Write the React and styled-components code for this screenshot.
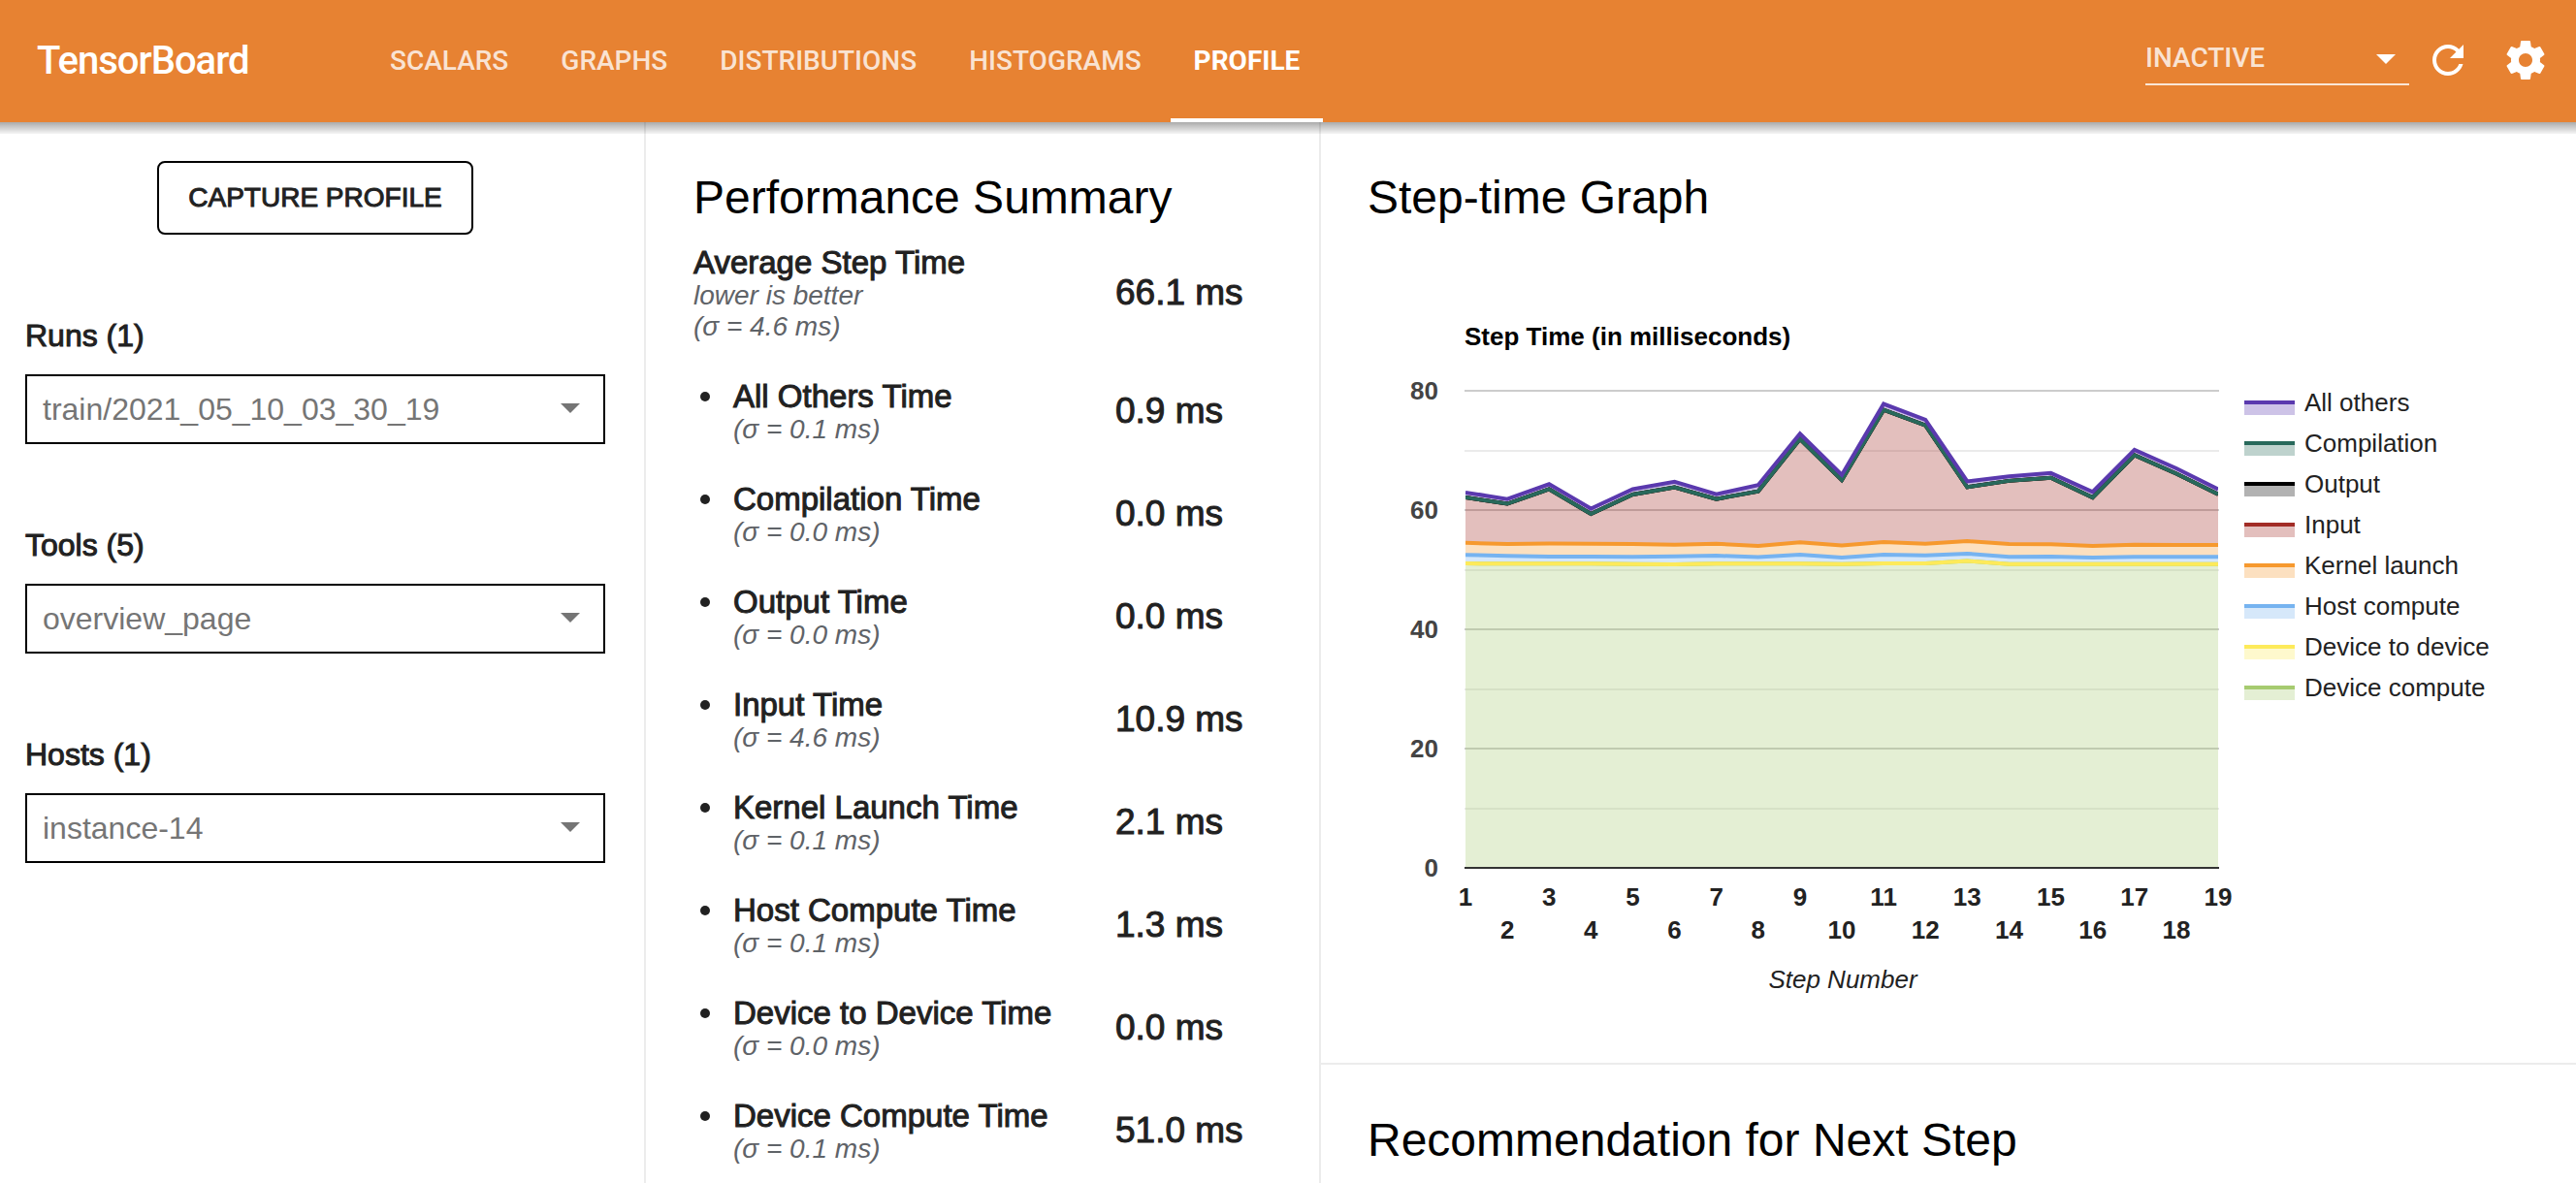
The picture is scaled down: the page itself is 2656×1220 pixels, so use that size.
import React from 'react';
import styled, { createGlobalStyle, css } from 'styled-components';

const SANS = '"Liberation Sans", Arial, Helvetica, sans-serif';
const ROBOTO = 'Roboto, "Liberation Sans", sans-serif';

const GlobalStyle = createGlobalStyle`
  *, *::before, *::after { box-sizing: border-box; }
  html, body, #root { height: 100%; }
  body {
    margin: 0;
    overflow: hidden;
    background: #fff;
    color: #212121;
    font-family: ${SANS};
  }
`;

/* The family has no 500 weight: a thin outline thickens the regular one. */
const mediumWeight = css`
  font-weight: 400;
  -webkit-text-stroke: 1px currentColor;
`;

const Page = styled.div`
  height: 100%;
  display: flex;
  flex-direction: column;
`;

/* ---------- header ---------- */

const Header = styled.header`
  position: relative;
  z-index: 1;
  flex: none;
  display: flex;
  align-items: center;
  height: 126px;
  padding: 0 28px 0 38px;
  background: #e78232;
  color: #fff;
  font-family: ${ROBOTO};

  &::after {
    content: '';
    position: absolute;
    top: 100%;
    left: 0;
    right: 0;
    height: 12px;
    background: linear-gradient(rgba(0, 0, 0, 0.33), rgba(0, 0, 0, 0.04));
    pointer-events: none;
  }
`;

const Brand = styled.h1`
  margin: 0;
  width: 340px;
  font-size: 40px;
  line-height: 48px;
  font-weight: 500;
  letter-spacing: -1px;
`;

const Tabs = styled.nav`
  flex: 1;
  align-self: stretch;
  display: flex;
  gap: 6px;
`;

const Tab = styled.a`
  display: flex;
  align-items: center;
  padding: 4px 24px 0;
  border-bottom: 4px solid ${(p) => (p.$active ? '#fff' : 'transparent')};
  color: ${(p) => (p.$active ? '#fff' : 'rgba(255, 255, 255, 0.8)')};
  font-size: 28px;
  line-height: 32px;
  font-weight: ${(p) => (p.$active ? 700 : 500)};
  text-decoration: none;
`;

const Actions = styled.div`
  display: flex;
  align-items: center;
  padding-bottom: 2px;
`;

const SelectBox = styled.div`
  display: grid;
  align-items: center;

  > * { grid-area: 1 / 1; }
  > svg { justify-self: end; pointer-events: none; }
`;

const StatusBox = styled(SelectBox)`
  width: 272px;
  margin-right: 16px;
  > svg { margin: 0 14px 2px 0; }
`;

const StatusSelect = styled.select`
  appearance: none;
  width: 100%;
  height: 52px;
  padding: 0 0 2px;
  border: 0;
  border-bottom: 2px solid rgba(255, 255, 255, 0.8);
  border-radius: 0;
  background: transparent;
  color: rgba(255, 255, 255, 0.8);
  font-family: ${ROBOTO};
  font-size: 28px;
  line-height: 32px;
  font-weight: 500;
`;

const IconButton = styled.button`
  display: flex;
  margin-left: ${(p) => p.$gap}px;
  padding: 0;
  border: 0;
  background: none;
  color: #fff;
`;

/* ---------- body ---------- */

const Body = styled.div`
  flex: 1;
  min-height: 0;
  display: flex;
  align-items: stretch;
`;

const Sidebar = styled.aside`
  flex: none;
  width: 666px;
  padding: 40px 40px 0 26px;
  border-right: 2px solid #ececec;
  display: flex;
  flex-direction: column;
  gap: 86px;
`;

const CaptureButton = styled.button`
  align-self: center;
  width: 326px;
  height: 76px;
  border: 2px solid #000;
  border-radius: 8px;
  background: #fff;
  color: #212121;
  font-family: ${SANS};
  font-size: 28px;
  ${mediumWeight}
`;

const Field = styled.div`
  display: flex;
  flex-direction: column;
  gap: 22px;
`;

const FieldLabel = styled.label`
  font-size: 32px;
  line-height: 36px;
  ${mediumWeight}
`;

const FieldBox = styled(SelectBox)`
  > svg { margin: 0 26px 2px 0; }
`;

const FieldSelect = styled.select`
  appearance: none;
  width: 100%;
  height: 72px;
  padding: 0 16px;
  border: 2px solid #000;
  border-radius: 0;
  background: #fff;
  color: #757575;
  font-family: ${SANS};
  font-size: 32px;
`;

const Summary = styled.section`
  flex: none;
  width: 696px;
  padding: 50px 48px 0 49px;
  border-right: 2px solid #ececec;
  overflow: hidden;
`;

const Heading = styled.h2`
  margin: 0;
  color: #000;
  font-size: 48px;
  line-height: 56px;
  font-weight: 400;
`;

const MetricList = styled.ul`
  margin: 19px 0 0;
  padding: 0;
  list-style: none;
  display: flex;
  flex-direction: column;
  gap: 36px;
`;

const Metric = styled.li`
  display: grid;
  grid-template-columns: 1fr 162px;
  align-items: center;
`;

const MetricText = styled.div`
  position: relative;
  padding: 2px 0 0 ${(p) => (p.$bullet ? 41 : 0)}px;

  ${(p) =>
    p.$bullet &&
    css`
      &::before {
        content: '';
        position: absolute;
        left: 7px;
        top: 15px;
        width: 10px;
        height: 10px;
        border-radius: 50%;
        background: #212121;
      }
    `}
`;

const MetricName = styled.div`
  font-size: 33px;
  line-height: 36px;
  white-space: nowrap;
  ${mediumWeight}
`;

const MetricNote = styled.div`
  color: #5f6368;
  font-size: 28px;
  line-height: 32px;
  font-style: italic;
`;

const MetricValue = styled.div`
  font-size: 37px;
  line-height: 40px;
  white-space: nowrap;
  ${mediumWeight}
`;

const Details = styled.main`
  flex: 1;
  min-width: 0;
  display: flex;
  flex-direction: column;
`;

const Card = styled.section`
  padding: 50px 48px 64px;
  border-bottom: 2px solid #ececec;
`;

const ChartRow = styled.div`
  display: flex;
  align-items: flex-start;
`;

const ChartSvg = styled.svg`
  flex: none;
  display: block;
  font-family: ${SANS};
  font-size: 26px;
`;

const Legend = styled.ul`
  margin: 0;
  padding: 168px 0 0;
  list-style: none;
  display: flex;
  flex-direction: column;
  gap: 12px;
`;

const LegendItem = styled.li`
  display: flex;
  align-items: flex-end;
  gap: 10px;
  color: #222;
  font-size: 26px;
  line-height: 30px;
  white-space: nowrap;
`;

const Swatch = styled.span`
  width: 52px;
  height: 15px;
  margin-bottom: 2px;
  border-top: 4px solid ${(p) => p.$color};
  background: ${(p) => p.$color}4d;
  background-clip: padding-box;
`;

/* ---------- icons ---------- */

const Caret = ({ color }) => (
  <svg width="20" height="10" viewBox="0 0 20 10" aria-hidden="true">
    <path d="M0 0h20L10 10z" fill={color} />
  </svg>
);

const RefreshIcon = () => (
  <svg width="48" height="48" viewBox="0 0 24 24" fill="currentColor" aria-hidden="true">
    <path d="M17.65 6.35C16.2 4.9 14.21 4 12 4c-4.42 0-7.99 3.58-7.99 8s3.57 8 7.99 8c3.73 0 6.84-2.55 7.73-6h-2.08c-.82 2.33-3.04 4-5.65 4-3.31 0-6-2.69-6-6s2.69-6 6-6c1.66 0 3.14.69 4.22 1.78L13 11h7V4l-2.35 2.35z" />
  </svg>
);

const SettingsIcon = () => (
  <svg width="48" height="48" viewBox="0 0 24 24" fill="currentColor" aria-hidden="true">
    <path d="M19.43 12.98c.04-.32.07-.64.07-.98s-.03-.66-.07-.98l2.11-1.65c.19-.15.24-.42.12-.64l-2-3.46c-.12-.22-.39-.3-.61-.22l-2.49 1c-.52-.4-1.08-.73-1.69-.98l-.38-2.65C14.46 2.18 14.25 2 14 2h-4c-.25 0-.46.18-.49.42l-.38 2.65c-.61.25-1.17.59-1.69.98l-2.49-1c-.23-.09-.49 0-.61.22l-2 3.46c-.13.22-.07.49.12.64l2.11 1.65c-.04.32-.07.65-.07.98s.03.66.07.98l-2.11 1.65c-.19.15-.24.42-.12.64l2 3.46c.12.22.39.3.61.22l2.49-1c.52.4 1.08.73 1.69.98l.38 2.65c.03.24.24.42.49.42h4c.25 0 .46-.18.49-.42l.38-2.65c.61-.25 1.17-.59 1.69-.98l2.49 1c.23.09.49 0 .61-.22l2-3.46c.12-.22.07-.49-.12-.64l-2.11-1.65zM12 15.5c-1.93 0-3.5-1.57-3.5-3.5s1.57-3.5 3.5-3.5 3.5 1.57 3.5 3.5-1.57 3.5-3.5 3.5z" />
  </svg>
);

/* ---------- data ---------- */

const TABS = ['SCALARS', 'GRAPHS', 'DISTRIBUTIONS', 'HISTOGRAMS', 'PROFILE'];

const FIELDS = [
  { id: 'runs', label: 'Runs (1)', value: 'train/2021_05_10_03_30_19' },
  { id: 'tools', label: 'Tools (5)', value: 'overview_page' },
  { id: 'hosts', label: 'Hosts (1)', value: 'instance-14' },
];

const METRICS = [
  { name: 'Average Step Time', notes: ['lower is better', '(σ = 4.6 ms)'], value: '66.1 ms', total: true },
  { name: 'All Others Time', notes: ['(σ = 0.1 ms)'], value: '0.9 ms' },
  { name: 'Compilation Time', notes: ['(σ = 0.0 ms)'], value: '0.0 ms' },
  { name: 'Output Time', notes: ['(σ = 0.0 ms)'], value: '0.0 ms' },
  { name: 'Input Time', notes: ['(σ = 4.6 ms)'], value: '10.9 ms' },
  { name: 'Kernel Launch Time', notes: ['(σ = 0.1 ms)'], value: '2.1 ms' },
  { name: 'Host Compute Time', notes: ['(σ = 0.1 ms)'], value: '1.3 ms' },
  { name: 'Device to Device Time', notes: ['(σ = 0.0 ms)'], value: '0.0 ms' },
  { name: 'Device Compute Time', notes: ['(σ = 0.1 ms)'], value: '51.0 ms' },
];

/* Running totals of the stack, in milliseconds, for steps 1 to 19. */
const upToInput = [62.1, 61.05, 63.5, 59.35, 62.6, 63.8, 61.85, 63.15, 71.9, 65.05, 76.8, 74.2, 63.85, 64.9, 65.4, 62.1, 69.2, 66.1, 62.65];
const upToKernel = [54.5, 54.3, 54.4, 54.35, 54.3, 54.2, 54.35, 54.0, 54.6, 54.05, 54.65, 54.35, 54.8, 54.3, 54.25, 54.0, 54.2, 54.15, 54.15];
const upToHost = [52.5, 52.3, 52.2, 52.2, 52.15, 52.25, 52.35, 52.1, 52.5, 52.05, 52.5, 52.4, 52.7, 52.15, 52.2, 52.05, 52.15, 52.15, 52.15];
const upToDevice = [51.05, 51.0, 51.0, 51.0, 50.95, 50.9, 51.0, 51.0, 51.0, 50.95, 51.05, 51.05, 51.45, 50.95, 50.95, 50.95, 50.95, 50.95, 50.95];

const SERIES = [
  { name: 'All others', color: '#5a39ae', top: [62.95, 61.85, 64.35, 60.25, 63.5, 64.75, 62.65, 64.2, 72.8, 65.9, 77.8, 75.15, 64.8, 65.65, 66.2, 63.05, 70.1, 67.0, 63.5] },
  { name: 'Compilation', color: '#28695b', top: upToInput },
  { name: 'Output', color: '#000000', top: upToInput },
  { name: 'Input', color: '#a22c26', top: upToInput },
  { name: 'Kernel launch', color: '#f6992e', top: upToKernel },
  { name: 'Host compute', color: '#76b3f0', top: upToHost },
  { name: 'Device to device', color: '#fdea5a', top: upToDevice },
  { name: 'Device compute', color: '#a6cb70', top: upToDevice },
];

/* ---------- chart ---------- */

const PLOT = { left: 101, right: 877, top: 171, bottom: 663, max: 80 };
const STEPS = Array.from({ length: 19 }, (_, i) => i + 1);
const xOf = (i) => PLOT.left + (i * (PLOT.right - PLOT.left)) / 18;
const yOf = (v) => PLOT.bottom - (v * (PLOT.bottom - PLOT.top)) / PLOT.max;
const trace = (values) => values.map((v, i) => `${xOf(i)} ${yOf(v)}`);

function StepTimeChart() {
  const stack = [...SERIES].reverse();
  const zero = STEPS.map(() => 0);
  return (
    <ChartSvg width="904" height="800" viewBox="0 0 904 800" role="img" aria-label="Step time by step number">
      <defs>
        <clipPath id="plot">
          <rect x={PLOT.left} y={PLOT.top} width={PLOT.right - PLOT.left} height={PLOT.bottom - PLOT.top} />
        </clipPath>
      </defs>
      <text x="100" y="124" fill="#000" fontWeight="700">Step Time (in milliseconds)</text>
      {[10, 20, 30, 40, 50, 60, 70, 80].map((v) => (
        <rect key={v} x="100" y={Math.round(yOf(v)) - 1} width="778" height="2" fill={v % 20 ? '#ebebeb' : '#cccccc'} />
      ))}
      {stack.map((s, n) => {
        const base = n ? stack[n - 1].top : zero;
        const area = [...trace(s.top), ...trace(base).reverse()];
        return <path key={s.name} d={`M${area.join('L')}Z`} fill={s.color} fillOpacity="0.3" />;
      })}
      <g clipPath="url(#plot)">
        {stack.map((s) => (
          <path key={s.name} d={`M${trace(s.top).join('L')}`} fill="none" stroke={s.color} strokeWidth="4" />
        ))}
      </g>
      <rect x="100" y={PLOT.bottom - 1} width="778" height="2" fill="#333" />
      {[0, 20, 40, 60, 80].map((v) => (
        <text key={v} x="73" y={yOf(v) + 9} fill="#444" fontWeight="700" textAnchor="end">{v}</text>
      ))}
      {STEPS.map((step, i) => (
        <text key={step} x={xOf(i)} y={step % 2 ? 702 : 736} fill="#222" fontWeight="700" textAnchor="middle">{step}</text>
      ))}
      <text x="490" y="787" fill="#222" fontStyle="italic" textAnchor="middle">Step Number</text>
    </ChartSvg>
  );
}

/* ---------- page ---------- */

export default function App() {
  return (
    <Page>
      <GlobalStyle />
      <Header>
        <Brand>TensorBoard</Brand>
        <Tabs>
          {TABS.map((tab) => (
            <Tab key={tab} href={`#${tab.toLowerCase()}`} $active={tab === 'PROFILE'}>{tab}</Tab>
          ))}
        </Tabs>
        <Actions>
          <StatusBox>
            <StatusSelect aria-label="Inactive dashboards" defaultValue="INACTIVE">
              <option>INACTIVE</option>
            </StatusSelect>
            <Caret color="#fff" />
          </StatusBox>
          <IconButton type="button" aria-label="Reload" $gap={0}><RefreshIcon /></IconButton>
          <IconButton type="button" aria-label="Settings" $gap={32}><SettingsIcon /></IconButton>
        </Actions>
      </Header>
      <Body>
        <Sidebar>
          <CaptureButton type="button">CAPTURE PROFILE</CaptureButton>
          {FIELDS.map((f) => (
            <Field key={f.id}>
              <FieldLabel htmlFor={f.id}>{f.label}</FieldLabel>
              <FieldBox>
                <FieldSelect id={f.id} defaultValue={f.value}>
                  <option>{f.value}</option>
                </FieldSelect>
                <Caret color="#757575" />
              </FieldBox>
            </Field>
          ))}
        </Sidebar>
        <Summary>
          <Heading>Performance Summary</Heading>
          <MetricList>
            {METRICS.map((m) => (
              <Metric key={m.name}>
                <MetricText $bullet={!m.total}>
                  <MetricName>{m.name}</MetricName>
                  {m.notes.map((note) => (
                    <MetricNote key={note}>{note}</MetricNote>
                  ))}
                </MetricText>
                <MetricValue>{m.value}</MetricValue>
              </Metric>
            ))}
          </MetricList>
        </Summary>
        <Details>
          <Card>
            <Heading>Step-time Graph</Heading>
            <ChartRow>
              <StepTimeChart />
              <Legend>
                {SERIES.map((s) => (
                  <LegendItem key={s.name}>
                    <Swatch $color={s.color} />
                    {s.name}
                  </LegendItem>
                ))}
              </Legend>
            </ChartRow>
          </Card>
          <Card>
            <Heading>Recommendation for Next Step</Heading>
          </Card>
        </Details>
      </Body>
    </Page>
  );
}
